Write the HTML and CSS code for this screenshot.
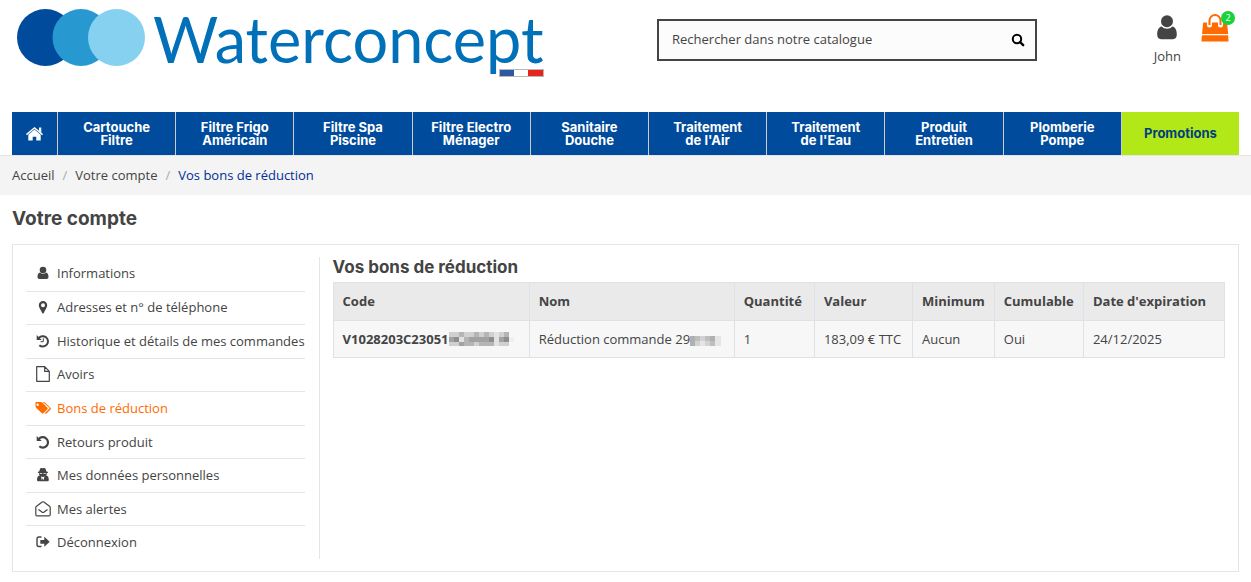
FILE: index.html
```html
<!DOCTYPE html>
<html lang="fr">
<head>
<meta charset="utf-8">
<meta name="viewport" content="width=device-width, initial-scale=1">
<title>Vos bons de réduction - Waterconcept</title>
<link rel="stylesheet" href="styles.css">
</head>
<body>
<header class="header container">
  <a class="logo" href="#" aria-label="Waterconcept">
    <svg class="logo-mark" width="128" height="60" viewBox="0 0 128 60" aria-hidden="true">
      <circle cx="28.500" cy="29.500" r="28.500" fill="#004b9b"/>
      <circle cx="64" cy="29.500" r="28.500" fill="#2898d0"/>
      <circle cx="99.500" cy="29.500" r="28.500" fill="#86d0f0"/>
    </svg>
    <span class="logo-name">Waterconcept</span>
    <svg class="logo-flag" width="45" height="8" viewBox="0 0 45 8" aria-hidden="true">
      <rect width="45" height="8" fill="#b9b9b4"/><rect x="1" y="1" width="14" height="6" fill="#2d58a4"/><rect x="15" y="1" width="14" height="6" fill="#fff"/><rect x="29" y="1" width="15" height="6" fill="#e6251c"/>
    </svg>
  </a>
  <form class="search" role="search">
    <input class="search-input" type="search" aria-label="Rechercher" placeholder="Rechercher dans notre catalogue">
    <button class="search-button" type="button" aria-label="Lancer la recherche">
      <svg width="14" height="14" viewBox="0 0 14 14"><circle cx="6" cy="6" r="4.200" fill="none" stroke="#000" stroke-width="2"/><path d="M9 9l3.200 3.200" stroke="#000" stroke-width="2.400" stroke-linecap="round"/></svg>
    </button>
  </form>
  <div class="account">
    <a class="user" href="#">
      <svg width="20" height="25" viewBox="0 0 20 25"><circle cx="10" cy="6.200" r="6"/><path d="M4.500 11.500C1.500 12 .2 15.500.2 19.500c0 2.800 1.500 4.700 3.800 4.700h12c2.300 0 3.800-1.900 3.800-4.700 0-4-1.300-7.500-4.300-8a8 8 0 0 1-11 0z"/></svg>
      <span>John</span>
    </a>
    <a class="cart" href="#" aria-label="Panier">
      <svg width="28" height="28" viewBox="0 0 28 28"><path d="M8.500 11V6.500a5.500 5.500 0 0 1 11 0V11" fill="none" stroke="#ff6b00" stroke-width="2"/><path d="M2.200 8.500H6v2.400a2.500 2.500 0 1 0 5 0V8.500h6v2.400a2.500 2.500 0 1 0 5 0V8.500h4l1.200 11.500H1zM.9 21.200h26.200l.5 6.300H.4z" fill="#ff6b00"/></svg>
      <span class="cart-count">2</span>
    </a>
  </div>
</header>
<nav class="menu container" aria-label="Catalogue">
  <a class="menu-item menu-home" href="#" aria-label="Accueil"><svg width="17" height="14" viewBox="0 0 17 14" fill="#fff"><path d="M8.500 0L17 7.100l-.9 1.100-7.600-6.500L.9 8.200 0 7.100zM13 .5h2.300v5l-2.300-2z"/><path d="M8.500 2.500l6.200 5.300v5.700h-4.400V9.700H6.700v3.800H2.300V7.800z"/></svg></a>
  <a class="menu-item" href="#">Cartouche<br>Filtre</a>
  <a class="menu-item" href="#">Filtre Frigo<br>Américain</a>
  <a class="menu-item" href="#">Filtre Spa<br>Piscine</a>
  <a class="menu-item" href="#">Filtre Electro<br>Ménager</a>
  <a class="menu-item" href="#">Sanitaire<br>Douche</a>
  <a class="menu-item" href="#">Traitement<br>de l'Air</a>
  <a class="menu-item" href="#">Traitement<br>de l'Eau</a>
  <a class="menu-item" href="#">Produit<br>Entretien</a>
  <a class="menu-item" href="#">Plomberie<br>Pompe</a>
  <a class="menu-item menu-promo" href="#">Promotions</a>
</nav>
<nav class="breadcrumb" aria-label="Fil d'Ariane">
  <ol class="breadcrumb-list container">
    <li><a href="#">Accueil</a></li>
    <li><a href="#">Votre compte</a></li>
    <li class="current" aria-current="page">Vos bons de réduction</li>
  </ol>
</nav>
<main class="main container">
  <h1 class="page-title">Votre compte</h1>
  <div class="panel">
    <ul class="side">
      <li><a href="#"><svg viewBox="0 0 16 16"><circle cx="8" cy="5" r="3.300"/><path d="M5 7.500C3.300 8 2.500 9.500 2.500 11.800c0 1.500.7 2.200 2 2.200h7c1.300 0 2-.7 2-2.200 0-2.300-.8-3.800-2.500-4.300a4 4 0 0 1-6 0z"/></svg>Informations</a></li>
      <li><a href="#"><svg viewBox="0 0 16 16"><path fill-rule="evenodd" d="M8 2a4.200 4.200 0 0 1 4.200 4.200c0 1.500-.5 2.200-3.400 7.700-.4.700-1.200.7-1.600 0C4.300 8.400 3.800 7.700 3.800 6.200A4.200 4.200 0 0 1 8 2zm0 2.200a2 2 0 1 0 0 4 2 2 0 0 0 0-4z"/></svg>Adresses et n° de téléphone</a></li>
      <li><a href="#"><svg viewBox="0 0 16 16"><path d="M3.600 5.300A5.200 5.200 0 1 1 4.300 12.200" fill="none" stroke="currentColor" stroke-width="2"/><path d="M1.700 2v5h5z"/><path d="M8.300 5.200v3.500H5.500" fill="none" stroke="currentColor"/></svg>Historique et détails de mes commandes</a></li>
      <li><a href="#"><svg viewBox="0 0 16 16"><path d="M1.700.7h8l4.600 4.700v9.900H1.700zM9.700.7v4.700h4.600" fill="none" stroke="currentColor" stroke-width="1.200" stroke-linejoin="round"/></svg>Avoirs</a></li>
      <li><a class="active" href="#"><svg viewBox="0 0 16 16"><path fill-rule="evenodd" d="M.5 2.800Q.5 2 1.300 2h4.600q.9 0 1.600.7l4.900 5q.7.800 0 1.500l-4 4q-.8.700-1.500 0L1.300 8Q.5 7.200.5 6.500zM3 3.500a1.200 1.200 0 1 0 0 2.300 1.200 1.200 0 0 0 0-2.300z"/><path d="M7.700 2h1q.8 0 1.500.7l5.300 5.200q.7.700 0 1.500l-4 4q-.9.800-1.800-.1l4.300-4.200q.8-.8 0-1.600z"/></svg>Bons de réduction</a></li>
      <li><a href="#"><svg viewBox="0 0 16 16"><path d="M3.600 5.300A5.200 5.200 0 1 1 4.300 12.200" fill="none" stroke="currentColor" stroke-width="2.200"/><path d="M1.700 2v5h5z"/></svg>Retours produit</a></li>
      <li><a href="#"><svg viewBox="0 0 16 16"><path fill-rule="evenodd" d="M5 2q.3-1.300 1.500-1l1 .3L9 1q1.200-.3 1.600 1l.7 2.300 1.700.7v.8l-1.300.3v1.400l-.6 1.100 1.400.5c1 1 1.300 2.500 1.300 4q0 1.200-1.200 1.200H3.200Q2 14.300 2 13.100c0-1.500.3-3 1.400-4l1.300-.5-.6-1.100V6.100L2.800 5.800V5l1.500-.7zM4.900 6v.7h2.300V6zM8.500 6v.7h2.300V6zM6 9.300l.8 4 .9-2 .9 2 .9-4-1.300.8h-.9z"/></svg>Mes données personnelles</a></li>
      <li><a href="#"><svg viewBox="0 0 16 16"><path d="M.8 6.500Q.8 5.700 1.500 5.200L7.200 1q.8-.5 1.600 0l5.700 4.200q.7.500.7 1.300v7.200q0 1.200-1.200 1.200H2q-1.200 0-1.200-1.200zM3.500 8.500l3.400 2.600q1.100.8 2.200 0l3.400-2.600" fill="none" stroke="currentColor" stroke-width="1.200"/></svg>Mes alertes</a></li>
      <li><a href="#"><svg viewBox="0 0 16 16"><path d="M6.500 3H4Q2 3 2 5v5.500q0 2 2 2h2.500" fill="none" stroke="currentColor" stroke-width="1.400"/><path d="M5.300 5.900h4V2.800L14.700 7.800 9.300 12.800V9.700h-4z"/></svg>Déconnexion</a></li>
    </ul>
    <section class="content">
      <h2 class="section-title">Vos bons de réduction</h2>
      <table class="vouchers">
        <thead><tr><th class="c-code">Code</th><th class="c-name">Nom</th><th class="c-qty">Quantité</th><th class="c-value">Valeur</th><th class="c-min">Minimum</th><th class="c-cum">Cumulable</th><th>Date d'expiration</th></tr></thead>
        <tbody><tr><th scope="row">V1028203C23051<svg class="mask" width="65" height="14" viewBox="0 0 65 14" shape-rendering="crispEdges" aria-hidden="true"><path fill="#d0d0d0" d="M0 0h60v14H0z"/><path fill="#b5b5b5" d="M10 0h5v5h-5zM25 0h5v5h-5zM35 0h5v5h-5zM55 0h5v5h-5zM15 5h10v9h-10zM30 10h15v4H30z"/><path fill="#a2a2a2" d="M0 5h5v5H0zM20 5h5v5h-5zM25 5h15v5H25zM50 5h5v5h-5zM10 10h5v4h-5z"/><path fill="#8e8e8e" d="M5 5h5v5H5zM40 5h5v5h-5zM55 5h5v5h-5z"/><path fill="#e2e2e2" d="M10 5h5v5h-5zM45 0h5v14h-5z"/><path fill="#efefef" d="M60 5h5v5h-5z"/></svg></th><td>Réduction commande 29<svg class="mask" width="31" height="10" viewBox="0 0 31 10" shape-rendering="crispEdges" aria-hidden="true"><path fill="#d2d2d2" d="M0 0h26v10H0z"/><path fill="#b0b0b0" d="M0 0h5v10H0zM20 0h5v5h-5z"/><path fill="#bebebe" d="M5 0h5v5H5zM15 0h5v5h-5zM20 5h5v5h-5z"/><path fill="#e5e5e5" d="M10 5h5v5h-5zM25 0h6v10h-6z"/></svg></td><td>1</td><td>183,09 € TTC</td><td>Aucun</td><td>Oui</td><td>24/12/2025</td></tr></tbody>
      </table>
    </section>
  </div>
</main>
</body>
</html>
```
FILE: styles.css
```css
* { box-sizing: border-box; }
body { margin: 0; background: #fff; color: #444; font: 13px/20px "Open Sans", sans-serif; }
a { color: inherit; text-decoration: none; }
.container { padding: 0 12px; }
.header { display: grid; grid-template-columns: 645px minmax(200px, 380px) 1fr; align-items: start; height: 112px; }
.logo { display: flex; position: relative; width: 532px; padding: 8px 0 0 5px; }
.logo-mark { flex: none; }
.logo-name { margin-left: 8px; color: #0071b9; font: 63px/62px Lato, sans-serif; }
.logo-flag { position: absolute; right: 0; top: 69px; }
.search { display: flex; height: 42px; margin-top: 19px; border: 2px solid #444; background: #fcfcfc; }
.search-input { flex: 1; min-width: 0; padding: 0 13px 2px; border: 0; outline: 0; background: none; color: #444; font: inherit; }
.search-input::placeholder { color: #444; opacity: 1; }
.search-button { display: flex; align-items: center; justify-content: center; width: 34px; padding: 0; border: 0; background: none; }
.account { display: flex; justify-content: flex-end; gap: 20px; padding: 15px 10px 0 0; }
.user { display: flex; flex-direction: column; align-items: center; gap: 6px; fill: #444; }
.cart { position: relative; height: 28px; margin-top: -1px; }
.cart-count { position: absolute; top: -3px; right: -6px; width: 14px; height: 14px; border-radius: 50%; background: #17d23c; color: #fff; font-size: 9px; line-height: 14px; text-align: center; }
.menu { display: flex; height: 43px; }
.menu-item { display: flex; flex: 1; align-items: center; justify-content: center; border-right: 1px solid #ccc; background: #004b9b; color: #fff; font: 700 13px/13px Inter, sans-serif; text-align: center; }
.menu-home { flex: 0 0 46px; }
.menu-promo { border: 0; background: #b2e817; color: #004080; }
.breadcrumb { height: 40px; border-top: 1px solid #e5e5e5; background: #f4f4f4; }
.breadcrumb-list { display: flex; margin: 0; padding-top: 9px; list-style: none; }
.breadcrumb-list li + li::before { content: "/"; padding: 0 8px; color: #aaa; }
.breadcrumb-list .current { color: #002f96; }
.page-title { margin: 0; padding: 12px 0 13px; font: 700 19px/24px Inter, sans-serif; }
.panel { display: flex; padding: 12px 13px; border: 1px solid #e5e5e5; }
.side { display: grid; grid-auto-rows: 1fr; flex: 0 0 293px; min-height: 302px; margin: 0; padding: 0 14px 0 0; border-right: 1px solid #e5e5e5; list-style: none; }
.side li + li { border-top: 1px solid #e5e5e5; }
.side a { display: flex; align-items: center; gap: 6px; height: 100%; padding: 0 0 1px 9px; white-space: nowrap; }
.side svg { flex: none; width: 16px; height: 16px; fill: currentColor; }
.side .active { color: #ff6b00; }
.content { flex: 1; padding-left: 13px; }
.section-title { margin: 0 0 5px; font: 700 17px/20px Inter, sans-serif; }
.vouchers { width: 100%; border-collapse: collapse; background: #f7f7f7; }
.vouchers th, .vouchers td { padding: 8px 9px; border: 1px solid #dee2e6; text-align: left; white-space: nowrap; }
.vouchers thead th { background: #eaeaea; line-height: 21px; }
.c-code { width: 22%; }
.c-name { width: 23%; }
.c-qty { width: 9%; }
.c-value { width: 11%; }
.c-min { width: 9%; }
.c-cum { width: 10%; }
.mask { vertical-align: -2px; }
```
